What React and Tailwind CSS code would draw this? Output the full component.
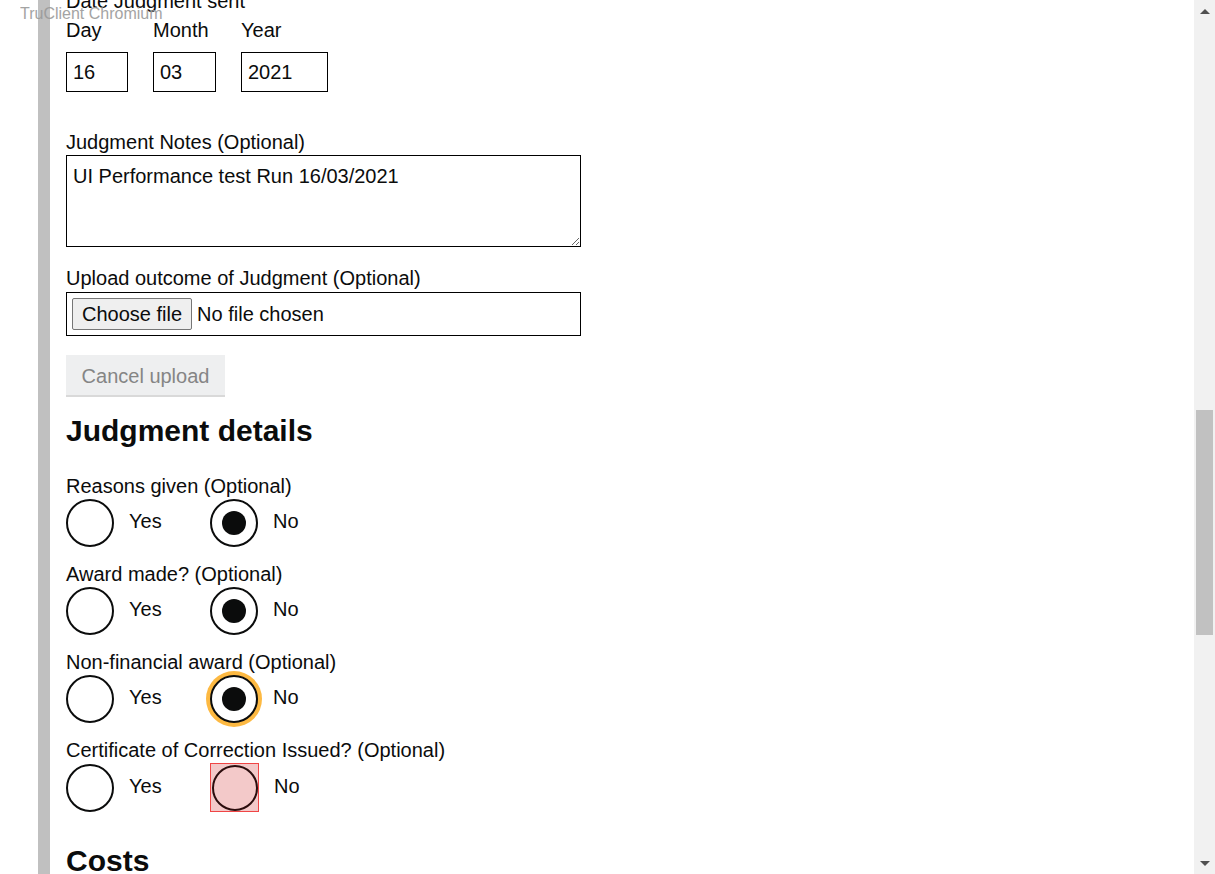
import React from "react";

const font = { fontFamily: '"Liberation Sans", Arial, sans-serif' };

function Radio({ checked, focused, flagged }) {
  if (flagged) {
    return (
      <div className="w-[49px] h-[49px] bg-[#f3c9c9] border border-[#f04545] flex items-center justify-center">
        <div className="w-[46px] h-[46px] rounded-full border-2 border-[#2b0d0d]" />
      </div>
    );
  }
  return (
    <div
      className={`w-[48px] h-[48px] rounded-full border-2 border-[#0b0c0c] bg-white flex items-center justify-center ${
        focused ? "ring-4 ring-[#fdb942]" : ""
      }`}
    >
      {checked && <div className="w-[24px] h-[24px] rounded-full bg-[#0b0c0c]" />}
    </div>
  );
}

function RadioGroup({ label, focused, flagged }) {
  return (
    <div className="mb-[16px]">
      <div className="leading-[23px] mb-[1px]">{label}</div>
      <div className="flex items-center">
        <div className="flex items-center gap-[15px] w-[144px]">
          <Radio />
          <span className="pb-[4px]">Yes</span>
        </div>
        <div className="flex items-center gap-[15px]">
          <Radio checked={!flagged} focused={focused} flagged={flagged} />
          <span className="pb-[4px]">No</span>
        </div>
      </div>
    </div>
  );
}

export default function App() {
  const dateParts = [
    { label: "Day", value: "16", w: "w-[62px]" },
    { label: "Month", value: "03", w: "w-[63px]" },
    { label: "Year", value: "2021", w: "w-[87px]" },
  ];

  return (
    <div
      className="relative w-[1215px] h-[874px] overflow-hidden bg-white flex text-[20px] text-[#0b0c0c]"
      style={font}
    >
      <div className="w-[38px] shrink-0" />
      <div className="w-[12px] shrink-0 bg-[#c0c0c0]" />

      {/* Form content */}
      <div className="flex-1 pl-[16px] -mt-[10px]">
        <div className="leading-[23px]">Date Judgment sent</div>

        <div className="flex gap-[25px] mt-[6px]">
          {dateParts.map((p) => (
            <div key={p.label} className="flex flex-col">
              <div className="leading-[23px] mb-[10px]">{p.label}</div>
              <input
                readOnly
                value={p.value}
                className={`${p.w} h-[40px] border border-black px-[6px] text-[20px] outline-none`}
                style={font}
              />
            </div>
          ))}
        </div>

        <div className="leading-[23px] mt-[39px] mb-[1px]">Judgment Notes (Optional)</div>
        <textarea
          readOnly
          value="UI Performance test Run 16/03/2021"
          className="block w-[515px] h-[92px] border border-black px-[6px] pt-[8px] text-[20px] leading-[25px] outline-none"
          style={font}
        />

        <div className="leading-[23px] mt-[20px] mb-[2px]">Upload outcome of Judgment (Optional)</div>
        <div className="w-[515px] h-[44px] border border-black flex items-center pl-[5px]">
          <button
            className="h-[32px] px-[9px] bg-[#efefef] border border-[#767676] rounded-[2px] text-[20px] leading-none"
            style={font}
          >
            Choose file
          </button>
          <span className="ml-[5px]">No file chosen</span>
        </div>

        <button
          className="mt-[19px] h-[42px] w-[159px] bg-[#eeeff0] border-b-2 border-[#d9d9d9] text-[#858585] text-[20px] flex items-center justify-center pt-[2px]"
          style={font}
        >
          Cancel upload
        </button>

        <h2 className="mt-[17px] text-[30px] leading-[34px] font-bold">Judgment details</h2>

        <div className="mt-[27px]">
          <RadioGroup label="Reasons given (Optional)" />
          <RadioGroup label="Award made? (Optional)" />
          <RadioGroup label="Non-financial award (Optional)" focused />
          <RadioGroup label="Certificate of Correction Issued? (Optional)" flagged />
        </div>

        <h2 className="mt-[32px] text-[30px] leading-[34px] font-bold">Costs</h2>
      </div>

      {/* Scrollbar */}
      <div className="w-[21px] shrink-0 bg-[#f1f1f1] flex flex-col items-center">
        <div className="h-[21px] flex items-center justify-center">
          <svg width="10" height="6" viewBox="0 0 10 6">
            <path d="M0 6 L5 1 L10 6 Z" fill="#505050" />
          </svg>
        </div>
        <div className="flex-1 w-full px-[2px]">
          <div className="mt-[389px] h-[225px] bg-[#c1c1c1]" />
        </div>
        <div className="h-[21px] flex items-center justify-center">
          <svg width="10" height="6" viewBox="0 0 10 6">
            <path d="M0 0 L5 5 L10 0 Z" fill="#505050" />
          </svg>
        </div>
      </div>

      {/* Automation overlay label */}
      <div className="absolute left-[20px] top-[4px] text-[16px] leading-[20px] text-[#9a9a9a] opacity-90 pointer-events-none">
        TruClient Chromium
      </div>
    </div>
  );
}
